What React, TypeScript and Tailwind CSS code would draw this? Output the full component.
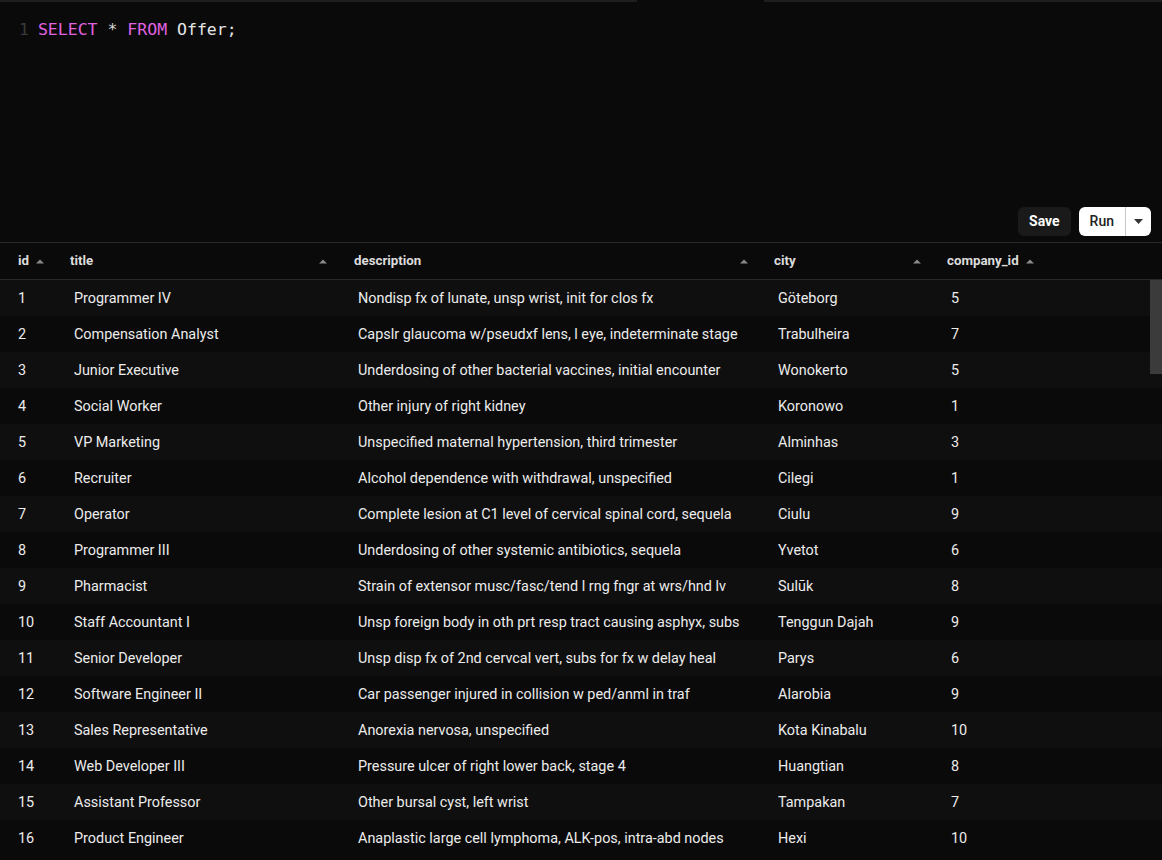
/* SQL-Konsole: Editor oben, Ergebnis-Tabelle unten. */

const ROWS: [number, string, string, string, number][] = [
  [1, "Programmer IV", "Nondisp fx of lunate, unsp wrist, init for clos fx", "Göteborg", 5],
  [2, "Compensation Analyst", "Capslr glaucoma w/pseudxf lens, l eye, indeterminate stage", "Trabulheira", 7],
  [3, "Junior Executive", "Underdosing of other bacterial vaccines, initial encounter", "Wonokerto", 5],
  [4, "Social Worker", "Other injury of right kidney", "Koronowo", 1],
  [5, "VP Marketing", "Unspecified maternal hypertension, third trimester", "Alminhas", 3],
  [6, "Recruiter", "Alcohol dependence with withdrawal, unspecified", "Cilegi", 1],
  [7, "Operator", "Complete lesion at C1 level of cervical spinal cord, sequela", "Ciulu", 9],
  [8, "Programmer III", "Underdosing of other systemic antibiotics, sequela", "Yvetot", 6],
  [9, "Pharmacist", "Strain of extensor musc/fasc/tend l rng fngr at wrs/hnd lv", "Sulūk", 8],
  [10, "Staff Accountant I", "Unsp foreign body in oth prt resp tract causing asphyx, subs", "Tenggun Dajah", 9],
  [11, "Senior Developer", "Unsp disp fx of 2nd cervcal vert, subs for fx w delay heal", "Parys", 6],
  [12, "Software Engineer II", "Car passenger injured in collision w ped/anml in traf", "Alarobia", 9],
  [13, "Sales Representative", "Anorexia nervosa, unspecified", "Kota Kinabalu", 10],
  [14, "Web Developer III", "Pressure ulcer of right lower back, stage 4", "Huangtian", 8],
  [15, "Assistant Professor", "Other bursal cyst, left wrist", "Tampakan", 7],
  [16, "Product Engineer", "Anaplastic large cell lymphoma, ALK-pos, intra-abd nodes", "Hexi", 10],
];

function Pfeil() {
  return (
    <svg width="10" height="6" viewBox="0 0 10 6" className="shrink-0">
      <path d="M1 5.5 L5 1.5 L9 5.5 Z" fill="#8a8a8a" />
    </svg>
  );
}

function Kopf({ label, className, pfeilRechts }: { label: string; className: string; pfeilRechts?: boolean }) {
  return (
    <div className={"flex items-center " + className}>
      <span className="font-bold">{label}</span>
      {pfeilRechts ? (
        <span className="ml-auto"><Pfeil /></span>
      ) : (
        <span className="ml-[6px]"><Pfeil /></span>
      )}
    </div>
  );
}

export default function App() {
  return (
    <div
      className="flex h-[860px] w-[1162px] flex-col overflow-hidden bg-[#0a0a0a] text-[#ececec]"
      style={{ fontFamily: "Roboto, 'Liberation Sans', sans-serif" }}
    >
      {/* obere Leiste */}
      <div className="flex h-[2px] shrink-0">
        <div className="w-[637px] bg-[#1e1e1e]" />
        <div className="w-[127px] bg-[#0a0a0a]" />
        <div className="flex-1 bg-[#1e1e1e]" />
      </div>

      {/* Editor */}
      <div className="relative h-[240px] shrink-0">
        <div
          className="flex items-center gap-[9px] pl-[19px] pt-[18px] text-[16.5px] leading-[20px]"
          style={{ fontFamily: "'DejaVu Sans Mono', 'Liberation Mono', monospace" }}
        >
          <span className="text-[#3a3a3a]">1</span>
          <span>
            <span className="text-[#e062e0]">SELECT</span>
            <span className="text-[#d4d4d4]"> * </span>
            <span className="text-[#e062e0]">FROM</span>
            <span className="text-[#e6e6e6]"> Offer;</span>
          </span>
        </div>

        <div className="absolute bottom-[6px] right-[11px] flex items-center gap-[8px]">
          <button
            type="button"
            className="h-[29px] rounded-[6px] bg-[#1a1a1a] px-[11px] text-[14px] font-bold text-white"
          >
            Save
          </button>
          <div className="flex h-[29px] items-center rounded-[6px] bg-white text-[#222]">
            <span className="px-[11px] text-[14px] font-medium">Run</span>
            <span className="h-full w-px bg-[#c8c8c8]" />
            <span className="flex w-[25px] items-center justify-center">
              <svg width="9" height="5" viewBox="0 0 9 5">
                <path d="M0 0 L9 0 L4.5 5 Z" fill="#333" />
              </svg>
            </span>
          </div>
        </div>
      </div>

      {/* Tabelle */}
      <div className="flex-1 border-t border-[#2a2a2a]">
        <div className="flex h-[37px] items-center border-b border-[#2a2a2a] text-[13.3px] text-[#dcdcdc]">
          <Kopf label="id" className="w-[56px] pl-[18px]" />
          <Kopf label="title" className="w-[284px] pl-[14px] pr-[12px]" pfeilRechts />
          <Kopf label="description" className="w-[420px] pl-[14px] pr-[11px]" pfeilRechts />
          <Kopf label="city" className="w-[173px] pl-[14px] pr-[11px]" pfeilRechts />
          <Kopf label="company_id" className="pl-[14px]" />
        </div>

        <div className="relative">
          {ROWS.map(([id, title, desc, city, cid]) => (
            <div
              key={id}
              className={
                "flex h-[36px] items-center pt-[2px] text-[14.4px] " +
                (id % 2 === 1 ? "bg-[#0f0f0f]" : "bg-[#0a0a0a]")
              }
            >
              <span className="w-[56px] pl-[18px]">{id}</span>
              <span className="w-[284px] pl-[18px]">{title}</span>
              <span className="w-[420px] pl-[18px]">{desc}</span>
              <span className="w-[173px] pl-[18px]">{city}</span>
              <span className="pl-[18px]">{cid}</span>
            </div>
          ))}
          {/* Scrollbalken */}
          <div className="absolute right-0 top-0 h-[94px] w-[12px] bg-[#3b3b3b]" />
        </div>
      </div>
    </div>
  );
}
